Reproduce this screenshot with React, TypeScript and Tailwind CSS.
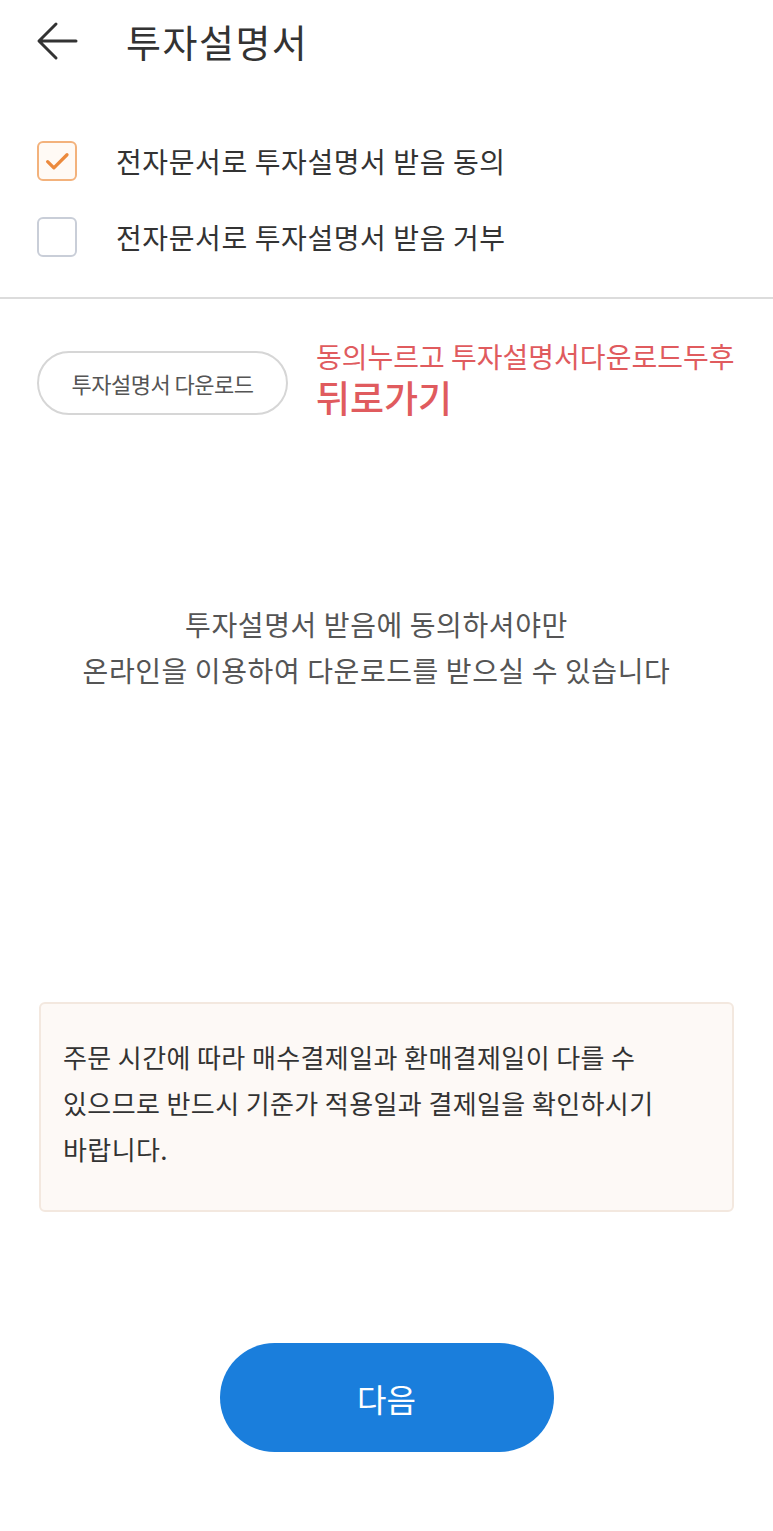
import React from 'react';

const font = { fontFamily: '"Noto Sans CJK KR", "Noto Sans", sans-serif' };

function Check({ checked }: { checked: boolean }) {
  return (
    <span
      className={`flex h-[40px] w-[40px] items-center justify-center rounded-[6px] border-2 ${
        checked ? 'border-[#f3b27c] bg-[#fffaf5]' : 'border-[#c9ced8] bg-white'
      }`}
    >
      {checked && (
        <svg width="30" height="30" viewBox="0 0 24 24" fill="none">
          <path d="M4.5 12.5l5 5L20 7" stroke="#ec8a3d" strokeWidth="2.6" strokeLinecap="round" strokeLinejoin="round" />
        </svg>
      )}
    </span>
  );
}

export default function App() {
  return (
    <div className="flex min-h-[1531px] w-[773px] flex-col bg-white text-[#333]" style={font}>
      {/* Header */}
      <div className="flex h-[82px] items-center pl-[36px]">
        <svg width="44" height="44" viewBox="0 0 44 44" fill="none">
          <path d="M40 22H4M20 5L3 22l17 17" stroke="#333" strokeWidth="3" strokeLinecap="round" strokeLinejoin="round" />
        </svg>
        <h1 className="ml-[46px] text-[38px] font-normal leading-none tracking-[1.5px]">투자설명서</h1>
      </div>

      {/* Options */}
      <div className="flex flex-col gap-[36px] pl-[37px] pt-[59px] pb-[40px]">
        <label className="flex items-center">
          <Check checked />
          <span className="ml-[39px] text-[28px] leading-none tracking-[0.6px]">전자문서로 투자설명서 받음 동의</span>
        </label>
        <label className="flex items-center">
          <Check checked={false} />
          <span className="ml-[39px] text-[28px] leading-none tracking-[0.6px]">전자문서로 투자설명서 받음 거부</span>
        </label>
      </div>

      <div className="h-[2px] bg-[#dcdcdc]" />

      {/* Download row */}
      <div className="flex items-start pl-[37px] pt-[38px]">
        <button className="mt-[14px] flex h-[64px] w-[251px] items-center justify-center rounded-full border-2 border-[#d6d6d6] text-[22px] tracking-[-0.5px] text-[#555]">
          투자설명서 다운로드
        </button>
        <div className="ml-[28px] flex flex-col text-[#e05b5e]">
          <span className="text-[28px] leading-[38px]">동의누르고 투자설명서다운로드두후</span>
          <span className="text-[37px] font-medium leading-[44px]">뒤로가기</span>
        </div>
      </div>

      {/* Center message */}
      <div className="mt-[182px] flex flex-col items-center pr-[20px] text-[28px] leading-[46px] tracking-[0.6px] text-[#555]">
        <p>투자설명서 받음에 동의하셔야만</p>
        <p>온라인을 이용하여 다운로드를 받으실 수 있습니다</p>
      </div>

      {/* Notice */}
      <div className="mx-[39px] mt-[309px] h-[210px] rounded-[6px] border-2 border-[#f3e8df] bg-[#fdf9f6] px-[22px] pt-[30px] text-[26px] leading-[46px] tracking-[0.4px] text-[#333]">
        <p>
          주문 시간에 따라 매수결제일과 환매결제일이 다를 수
          <br />
          있으므로 반드시 기준가 적용일과 결제일을 확인하시기
          <br />
          바랍니다.
        </p>
      </div>

      {/* Next */}
      <div className="mt-[131px] flex justify-center">
        <button className="h-[109px] w-[334px] rounded-full bg-[#1a7edc] text-[32px] text-white">다음</button>
      </div>
    </div>
  );
}
